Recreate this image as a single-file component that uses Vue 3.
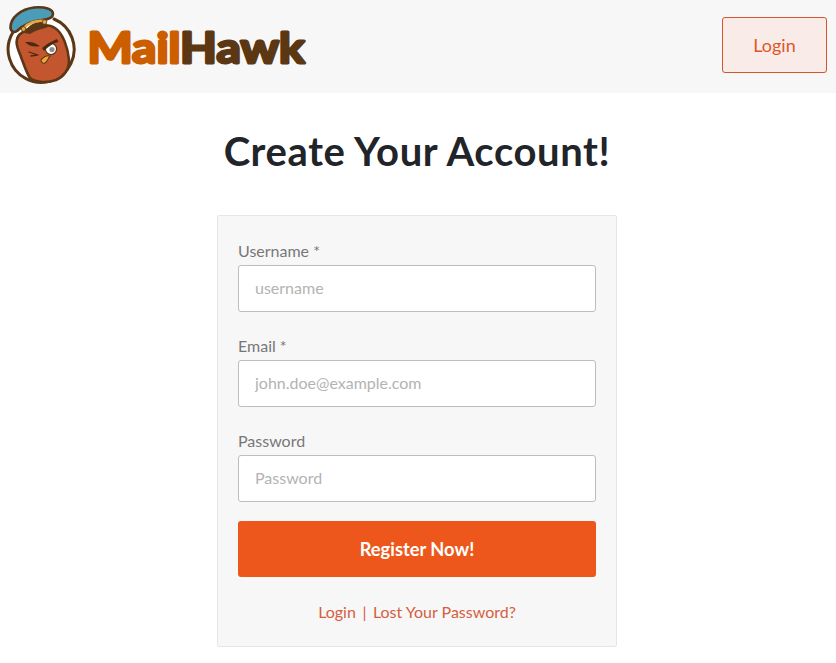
<script setup>
const fields = [
  { label: 'Username *', placeholder: 'username', type: 'text' },
  { label: 'Email *', placeholder: 'john.doe@example.com', type: 'email' },
  { label: 'Password', placeholder: 'Password', type: 'password' },
]
</script>

<template>
  <div class="page">
    <header class="topbar">
      <a class="brand" href="#">
        <svg class="mascot" width="78" height="93" viewBox="0 0 78 93" aria-hidden="true">
          <circle cx="41.3" cy="49.5" r="33" fill="#fff" />
          <path d="M12.5 33 A33 33 0 1 0 54 19" fill="none" stroke="#5c3717" stroke-width="3" stroke-linecap="round" />
          <path d="M19 35 C28 27 46 22 55 28 C63 33 68 48 69 60 C69.5 70 63 77 56 80 C48 83 36 83 30 78 C27 74 24 65 21 57 C18 49 14 42 19 35 Z" fill="#c4562f" stroke="#5c3717" stroke-width="2.6" />
          <path d="M10.5 28 C10 17 22 9 34 7.5 C45 6.5 53 9 53 14 C53 18 47 19.5 42 20 C32 21 23 25 17 31 C14 33 11 32 10.5 28 Z" fill="#4b9cb9" stroke="#5c3717" stroke-width="2.6" />
          <path d="M24 33 C28 25 37 20 46 23 L48 27 C42 29 36 30 30 34 Z" fill="#5c3717" />
          <path d="M24 28 C28 23 36 20 44 21" fill="none" stroke="#eba93a" stroke-width="2.4" stroke-linecap="round" />
          <circle cx="23.5" cy="29" r="2.3" fill="#eba93a" stroke="#5c3717" stroke-width=".8" />
          <circle cx="44.5" cy="22" r="2.3" fill="#eba93a" stroke="#5c3717" stroke-width=".8" />
          <circle cx="51" cy="49" r="5.6" fill="#fff" stroke="#5c3717" stroke-width="1.2" />
          <circle cx="52" cy="49.5" r="2.6" fill="#8d8d8d" />
          <path d="M42 48 C47 44 52 41 57 39 L58.5 42 C53 43 48 47 44 51 Z" fill="#4a2a10" />
          <path d="M25 42 C29 42 33 41 40 46 C34 47.5 29 46 25 42 Z" fill="#4a2a10" />
          <path d="M29 52 L38 55 M31 56 L37 55" stroke="#4a2a10" stroke-width="1.3" stroke-linecap="round" />
          <path d="M41 60 C43 57 47 55 50 56 C48 58 48 61 45 63 C43 64 41 62 41 60 Z" fill="#eba93a" stroke="#5c3717" stroke-width="1.1" />
        </svg>
        <svg class="wordmark" width="224" height="50" viewBox="0 0 224 50" role="img" aria-label="MailHawk">
          <text x="2.5" y="42" textLength="217" lengthAdjust="spacingAndGlyphs" class="wordmark-text"><tspan class="mail">Mail</tspan><tspan class="hawk">Hawk</tspan></text>
        </svg>
      </a>
      <a class="login-btn" href="#">Login</a>
    </header>

    <main class="content">
      <h1 class="title">Create Your Account!</h1>
      <form class="card" @submit.prevent>
        <div v-for="f in fields" :key="f.label" class="field">
          <label class="label">{{ f.label }}</label>
          <input class="input" :type="f.type" :placeholder="f.placeholder" />
        </div>
        <button class="submit" type="submit">Register Now!</button>
        <p class="links"><a href="#">Login</a><span class="sep">|</span><a href="#">Lost Your Password?</a></p>
      </form>
    </main>
  </div>
</template>

<style scoped>
.page {
  font-family: Lato, "Liberation Sans", sans-serif;
  font-size: 16px;
  color: #212529;
  background: #fff;
}
.topbar {
  height: 93px;
  background: #f7f7f7;
  display: flex;
  align-items: flex-start;
  justify-content: space-between;
  padding: 17px 9px 0 0;
  box-sizing: border-box;
}
.brand {
  display: flex;
  align-items: center;
  text-decoration: none;
  height: 93px;
  margin-top: -17px;
}
.mascot {
  display: block;
  flex: none;
  margin-right: 7px;
}
.wordmark {
  display: block;
  flex: none;
  margin-top: -1px;
}
.wordmark-text {
  font-family: Lato, sans-serif;
  font-size: 42px;
  font-weight: 700;
  stroke-width: 2.8px;
  stroke-linejoin: round;
}
.mail { fill: #cc5e00; stroke: #cc5e00; }
.hawk { fill: #5c3714; stroke: #5c3714; }
.login-btn {
  width: 105px;
  height: 56px;
  box-sizing: border-box;
  display: flex;
  align-items: center;
  justify-content: center;
  border: 1px solid #d4552b;
  border-radius: 3px;
  background: #f9ece8;
  color: #e2552b;
  font-size: 18px;
  text-decoration: none;
}
.content {
  display: flex;
  flex-direction: column;
  align-items: center;
  padding-right: 2px;
}
.title {
  margin: 32px 0 38px;
  font-size: 40px;
  line-height: 52px;
  font-weight: 700;
  letter-spacing: 0.6px;
  color: #212529;
}
.card {
  width: 400px;
  box-sizing: border-box;
  background: #f7f7f7;
  border: 1px solid #e6e6e6;
  border-radius: 2px;
  padding: 23px 20px 22px;
}
.field {
  margin-bottom: 22px;
}
.field:last-of-type {
  margin-bottom: 19px;
}
.label {
  display: block;
  line-height: 24px;
  margin-bottom: 2px;
  color: #777;
}
.input {
  display: block;
  width: 100%;
  height: 47px;
  box-sizing: border-box;
  padding: 0 16px 2px;
  border: 1px solid #bdbdbd;
  border-radius: 3px;
  background: #fff;
  font: inherit;
  color: #495057;
  outline: none;
}
.input::placeholder {
  color: #b3b3b3;
  opacity: 1;
}
.submit {
  display: block;
  width: 100%;
  height: 56px;
  border: 0;
  border-radius: 3px;
  background: #ed571b;
  color: #fff;
  font: 700 18.3px Lato, "Liberation Sans", sans-serif;
}
.links {
  margin: 23px 0 0;
  line-height: 24px;
  text-align: center;
  color: #d4603f;
}
.links a {
  color: #d4603f;
  text-decoration: none;
}
.sep {
  margin: 0 6.5px;
}
</style>

<style>
html, body {
  background: #fff;
}
</style>
